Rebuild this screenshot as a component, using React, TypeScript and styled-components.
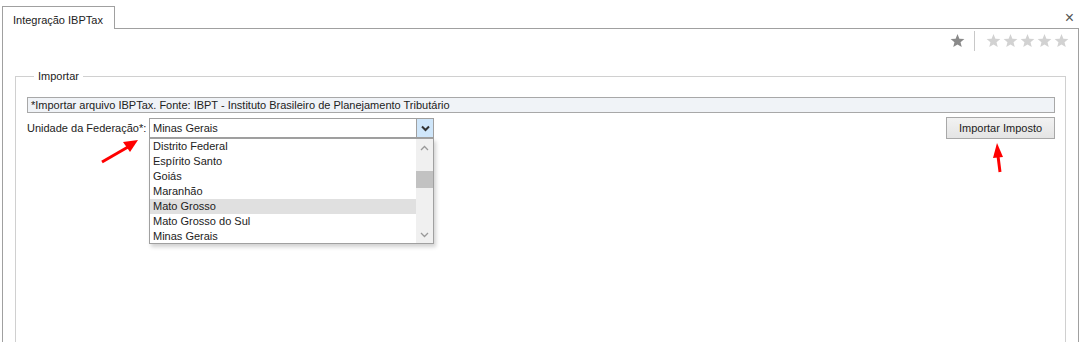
import React from 'react';
import styled, { createGlobalStyle } from 'styled-components';

const states = [
  'Distrito Federal',
  'Espírito Santo',
  'Goiás',
  'Maranhão',
  'Mato Grosso',
  'Mato Grosso do Sul',
  'Minas Gerais',
];

const Star = ({ color }: { color: string }) => (
  <svg width="15" height="14" viewBox="0 0 24 23">
    <path d="M12 0l3.1 7.6 8.2.6-6.3 5.3 2 8L12 17.2 5 21.5l2-8L.7 8.2l8.2-.6z" fill={color} />
  </svg>
);

const App = () => {
  return (
    <Page>
      <GlobalStyle />
      <TabBar>
        <Tab>Integração IBPTax</Tab>
        <Close>×</Close>
      </TabBar>
      <Panel>
        <RatingRow>
          <Star color="#8a8a8a" />
          <Separator />
          <Stars>
            {[0, 1, 2, 3, 4].map((i) => (
              <Star key={i} color="#d2d2d2" />
            ))}
          </Stars>
        </RatingRow>
        <Group>
          <Legend>Importar</Legend>
          <InfoBar>*Importar arquivo IBPTax. Fonte: IBPT - Instituto Brasileiro de Planejamento Tributário</InfoBar>
          <FormRow>
            <Label>Unidade da Federação*:</Label>
            <SelectWrap>
              <SelectBox>
                <SelectValue>Minas Gerais</SelectValue>
                <SelectButton>
                  <svg width="9" height="7" viewBox="0 0 9 7">
                    <path d="M1 1.5l3.5 3.5L8 1.5" stroke="#333" strokeWidth="2" fill="none" />
                  </svg>
                </SelectButton>
              </SelectBox>
              <DropList>
                <Options>
                  {states.map((s) => (
                    <Option key={s} $active={s === 'Mato Grosso'}>
                      {s}
                    </Option>
                  ))}
                </Options>
                <ScrollBar>
                  <ScrollArrow>
                    <svg width="9" height="6" viewBox="0 0 9 6">
                      <path d="M1 5l3.5-3.5L8 5" stroke="#999" strokeWidth="1.3" fill="none" />
                    </svg>
                  </ScrollArrow>
                  <ScrollTrack>
                    <Thumb />
                  </ScrollTrack>
                  <ScrollArrow>
                    <svg width="9" height="6" viewBox="0 0 9 6">
                      <path d="M1 1l3.5 3.5L8 1" stroke="#999" strokeWidth="1.3" fill="none" />
                    </svg>
                  </ScrollArrow>
                </ScrollBar>
              </DropList>
            </SelectWrap>
            <ImportButton>Importar Imposto</ImportButton>
          </FormRow>
        </Group>
      </Panel>
      <Arrows width="1079" height="342">
        <line x1="102" y1="162" x2="128" y2="147" stroke="#ff0000" strokeWidth="3" />
        <polygon points="138,140 123,142 130,152" fill="#ff0000" />
        <line x1="1000" y1="172" x2="998" y2="156" stroke="#ff0000" strokeWidth="3" />
        <polygon points="997,143 993,158 1003,157" fill="#ff0000" />
      </Arrows>
    </Page>
  );
};

export default App;

const GlobalStyle = createGlobalStyle`
  html, body {
    margin: 0;
    padding: 0;
    background: #ffffff;
    overflow: hidden;
  }
  body {
    font-family: "Liberation Sans", Arial, sans-serif;
    font-size: 11px;
    color: #222;
  }
`;

const Page = styled.div`
  position: relative;
  width: 1079px;
  height: 342px;
  padding: 5px 0 0 2px;
  box-sizing: border-box;
  display: flex;
  flex-direction: column;
`;

const TabBar = styled.div`
  display: flex;
  align-items: flex-end;
  height: 24px;
  margin-bottom: -1px;
  position: relative;
  z-index: 1;
`;

const Tab = styled.div`
  width: 113px;
  height: 23px;
  box-sizing: border-box;
  border: 1px solid #a0a0a0;
  border-bottom: none;
  background: #fff;
  padding: 7px 0 0 10px;
  font-size: 11px;
  line-height: 13px;
`;

const Close = styled.div`
  margin-left: auto;
  margin-right: 5px;
  align-self: center;
  margin-top: 2px;
  font-size: 16px;
  color: #555;
  line-height: 16px;
`;

const Panel = styled.div`
  flex: 1;
  width: 1077px;
  box-sizing: border-box;
  border: 1px solid #a0a0a0;
  border-bottom: none;
  padding: 2px 12px 0 12px;
  display: flex;
  flex-direction: column;
`;

const RatingRow = styled.div`
  display: flex;
  align-items: center;
  justify-content: flex-end;
  height: 20px;
  margin-right: -3px;
  svg {
    display: block;
  }
`;

const Separator = styled.div`
  width: 1px;
  height: 20px;
  background: #c8c8c8;
  margin: 0 11px 0 9px;
`;

const Stars = styled.div`
  display: flex;
  gap: 2px;
`;

const Group = styled.fieldset`
  flex: 1;
  margin: 19px 0 0 0;
  padding: 14px 10px 0 11px;
  border: 1px solid #d0d0d0;
  border-bottom: none;
  min-width: 0;
`;

const Legend = styled.legend`
  padding: 0 4px;
  margin-left: 7px;
  font-size: 11px;
  line-height: 13px;
`;

const InfoBar = styled.div`
  height: 16px;
  box-sizing: border-box;
  border: 1px solid #a8a8a8;
  background: #f0f3f7;
  padding: 1px 4px 0 3px;
  line-height: 13px;
  white-space: nowrap;
`;

const FormRow = styled.div`
  display: flex;
  align-items: flex-start;
  margin-top: 5px;
`;

const Label = styled.div`
  width: 122px;
  padding-top: 4px;
  line-height: 13px;
`;

const SelectWrap = styled.div`
  position: relative;
  width: 285px;
`;

const SelectBox = styled.div`
  display: flex;
  height: 20px;
  box-sizing: border-box;
  border: 1px solid #a0a0a0;
  background: #fff;
`;

const SelectValue = styled.div`
  flex: 1;
  padding: 3px 0 0 3px;
  line-height: 13px;
`;

const SelectButton = styled.div`
  width: 16px;
  background: #cfe6fa;
  border-left: 1px solid #a0a0a0;
  display: flex;
  align-items: center;
  justify-content: center;
`;

const DropList = styled.div`
  position: absolute;
  top: 20px;
  left: 0;
  width: 285px;
  height: 106px;
  box-sizing: border-box;
  border: 1px solid #a0a0a0;
  background: #fff;
  display: flex;
  box-shadow: 2px 3px 4px rgba(0, 0, 0, 0.18);
`;

const Options = styled.div`
  flex: 1;
`;

const Option = styled.div<{ $active?: boolean }>`
  height: 15px;
  line-height: 15px;
  padding-left: 3px;
  background: ${(p) => (p.$active ? '#e0e0e0' : 'transparent')};
`;

const ScrollBar = styled.div`
  width: 17px;
  background: #f0f0f0;
  display: flex;
  flex-direction: column;
`;

const ScrollArrow = styled.div`
  height: 17px;
  display: flex;
  align-items: center;
  justify-content: center;
`;

const ScrollTrack = styled.div`
  flex: 1;
  padding-top: 15px;
`;

const Thumb = styled.div`
  height: 17px;
  background: #c2c2c2;
`;

const ImportButton = styled.button`
  margin-left: auto;
  margin-top: -1px;
  width: 109px;
  height: 22px;
  border: 1px solid #a8a8a8;
  background: linear-gradient(#f2f2f2, #e4e4e4);
  font-family: "Liberation Sans", Arial, sans-serif;
  font-size: 11px;
  color: #222;
  padding: 0;
`;

const Arrows = styled.svg`
  position: absolute;
  top: 0;
  left: 0;
  pointer-events: none;
  z-index: 5;
`;
